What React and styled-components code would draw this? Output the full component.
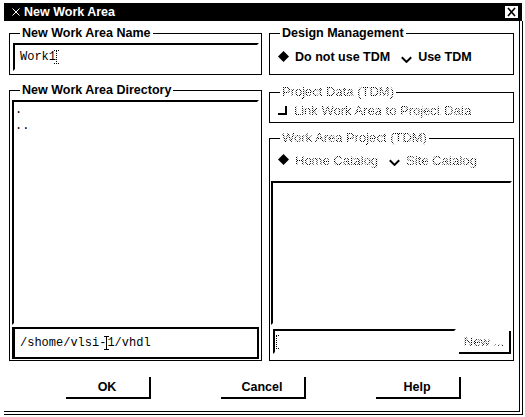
import React from "react";
import styled, { createGlobalStyle, css } from "styled-components";

const GlobalStyle = createGlobalStyle`
  html, body {
    margin: 0;
    padding: 0;
    background: #fff;
  }
  body {
    font-family: "Liberation Sans", Arial, sans-serif;
    color: #000;
  }
`;

// insensitive widgets draw their text through a 50% stipple
const stipple = css`
  color: transparent;
  background-image: repeating-conic-gradient(#000 0% 25%, #fff 0% 50%);
  background-size: 2px 2px;
  -webkit-background-clip: text;
  background-clip: text;
`;

function Caret({ dotted }) {
  const dash = dotted ? "1 1" : undefined;
  return (
    <CaretMark width="5" height="14" viewBox="0 0 5 14">
      <path d="M0 0.5H5M0 13.5H5" stroke="#000" strokeDasharray={dash} />
      <path d="M2.5 1V13" stroke="#000" strokeDasharray={dash} />
    </CaretMark>
  );
}

function Toggle({ on, disabled, children }) {
  return (
    <ToggleItem>
      <svg width="11" height="12" viewBox="0 0 11 12">
        {on ? (
          <path d="M5.5 0L11 5.5L5.5 11L0 5.5Z" fill="#000" />
        ) : (
          <path d="M0.8 6.2L5.5 10.9L10.2 6.2" fill="none" stroke="#000" strokeWidth="2" />
        )}
      </svg>
      <ToggleLabel $disabled={disabled}>{children}</ToggleLabel>
    </ToggleItem>
  );
}

function App() {
  return (
    <>
      <GlobalStyle />
      <Window>
        <TitleBar>
          <svg width="8" height="8" viewBox="0 0 8 8">
            <path d="M0.5 0.5L7.5 7.5M7.5 0.5L0.5 7.5" stroke="#fff" strokeWidth="1" />
          </svg>
          <TitleText>New Work Area</TitleText>
          <CloseBox>
            <svg width="13" height="12" viewBox="0 0 13 12">
              <path d="M3 2L10 10M10 2L3 10" stroke="#000" strokeWidth="1.6" />
            </svg>
          </CloseBox>
        </TitleBar>
        <Frame>
          <Columns>
            <Column>
              <Group>
                <Legend>New Work Area Name</Legend>
                <GroupBody $pad="3px 2px 3px 3px">
                  <TextField $h={28}>
                    Work1
                    <Caret dotted />
                  </TextField>
                </GroupBody>
              </Group>
              <Group $top={8} $grow>
                <Legend>New Work Area Directory</Legend>
                <GroupBody $pad="3px 2px 1px 2px">
                  <List>
                    <ListItem>.</ListItem>
                    <ListItem>..</ListItem>
                  </List>
                  <TextField $h={32} $focus $top={2}>
                    /shome/vlsi-
                    <Caret />
                    1/vhdl
                  </TextField>
                </GroupBody>
              </Group>
            </Column>
            <Column>
              <Group>
                <Legend>Design Management</Legend>
                <GroupBody $pad="6px 0 6px 8px">
                  <ToggleRow>
                    <Toggle on>Do not use TDM</Toggle>
                    <Toggle>Use TDM</Toggle>
                  </ToggleRow>
                </GroupBody>
              </Group>
              <Group $top={10}>
                <Legend $disabled>Project Data (TDM)</Legend>
                <GroupBody $pad="0 0 1px 8px">
                  <ToggleRow>
                    <ToggleItem $gap={7}>
                      <CheckMark />
                      <ToggleLabel $disabled>Link Work Area to Project Data</ToggleLabel>
                    </ToggleItem>
                  </ToggleRow>
                </GroupBody>
              </Group>
              <Group $top={8} $grow>
                <Legend $disabled>Work Area Project (TDM)</Legend>
                <GroupBody $pad="4px 1px 6px 1px">
                  <ToggleRow $indent={7}>
                    <Toggle on disabled>Home Catalog</Toggle>
                    <Toggle disabled>Site Catalog</Toggle>
                  </ToggleRow>
                  <List $top={10} />
                  <FieldRow>
                    <TextField $h={25} $pad={1} $grow>
                      <Caret dotted />
                    </TextField>
                    <PushButton $small>New ...</PushButton>
                  </FieldRow>
                </GroupBody>
              </Group>
            </Column>
          </Columns>
          <ButtonRow>
            <PushButton>OK</PushButton>
            <PushButton>Cancel</PushButton>
            <PushButton>Help</PushButton>
          </ButtonRow>
        </Frame>
      </Window>
    </>
  );
}

export default App;

const Window = styled.div`
  margin: 3px 0 0 4px;
  width: 519px;
  display: flex;
  flex-direction: column;
`;

const TitleBar = styled.div`
  box-sizing: border-box;
  width: 518px;
  height: 18px;
  padding: 0 4px 0 8px;
  display: flex;
  align-items: center;
  background: #000;
  color: #fff;
`;

const TitleText = styled.span`
  flex: 1;
  margin-left: 4px;
  font-size: 12.5px;
  font-weight: bold;
  line-height: 14px;
`;

const CloseBox = styled.span`
  width: 13px;
  height: 12px;
  display: flex;
  background: #fff;
`;

const Frame = styled.div`
  box-sizing: border-box;
  width: 519px;
  padding: 5px 5px 12px 5px;
  border-right: 4px double #000;
  border-bottom: 4px double #000;
`;

const Columns = styled.div`
  display: grid;
  grid-template-columns: 253px 245px;
  column-gap: 7px;
  height: 335px;
`;

const Column = styled.div`
  display: flex;
  flex-direction: column;
  min-height: 0;
`;

const Group = styled.fieldset`
  margin: ${(p) => p.$top || 0}px 0 0 0;
  padding: 0;
  min-width: 0;
  min-height: 0;
  border: 1px solid #000;
  display: flex;
  flex-direction: column;
  flex: ${(p) => (p.$grow ? 1 : "none")};
`;

const Legend = styled.legend`
  margin-left: 10px;
  padding: 0 2px;
  font-size: ${(p) => (p.$disabled ? "13px" : "12.5px")};
  font-weight: ${(p) => (p.$disabled ? "normal" : "bold")};
  line-height: 14px;
  ${(p) => p.$disabled && stipple}
`;

const GroupBody = styled.div`
  flex: 1;
  min-height: 0;
  padding: ${(p) => p.$pad};
  display: flex;
  flex-direction: column;
`;

const TextField = styled.div`
  box-sizing: border-box;
  height: ${(p) => p.$h}px;
  margin-top: ${(p) => p.$top || 0}px;
  flex: ${(p) => (p.$grow ? 1 : "none")};
  padding-left: ${(p) => (p.$pad != null ? p.$pad : 5)}px;
  display: flex;
  align-items: center;
  white-space: pre;
  font-family: "Liberation Mono", "Courier New", monospace;
  font-size: 12px;
  border-top: 2px solid #000;
  border-left: ${(p) => (p.$focus ? "3px" : "2px")} solid #000;
  border-right: 2px solid ${(p) => (p.$focus ? "#000" : "#fff")};
  border-bottom: 2px solid ${(p) => (p.$focus ? "#000" : "#fff")};
`;

const CaretMark = styled.svg`
  flex: none;
  margin: 0 -2px 0 -2px;
`;

const List = styled.div`
  flex: 1;
  min-height: 0;
  margin-top: ${(p) => p.$top || 0}px;
  padding-left: 1px;
  border-top: 2px solid #000;
  border-left: 2px solid #000;
  border-right: 2px solid #fff;
  border-bottom: 2px solid #fff;
  font-family: "Liberation Mono", "Courier New", monospace;
  font-size: 12px;
  line-height: 16px;
`;

const ListItem = styled.div`
  height: 16px;
`;

const ToggleRow = styled.div`
  height: 22px;
  padding-left: ${(p) => p.$indent || 0}px;
  display: flex;
  align-items: center;
  gap: 11px;
`;

const ToggleItem = styled.span`
  display: inline-flex;
  align-items: center;
  gap: ${(p) => p.$gap || 6}px;
`;

const ToggleLabel = styled.span`
  font-size: ${(p) => (p.$disabled ? "13px" : "12.5px")};
  font-weight: ${(p) => (p.$disabled ? "normal" : "bold")};
  line-height: 15px;
  white-space: nowrap;
  ${(p) => p.$disabled && stipple}
`;

const CheckMark = styled.span`
  box-sizing: border-box;
  width: 9px;
  height: 9px;
  border-right: 2px solid #000;
  border-bottom: 2px solid #000;
`;

const FieldRow = styled.div`
  margin-top: 4px;
  padding: 0 1px 0 2px;
  display: flex;
  align-items: flex-end;
  gap: 3px;
`;

const PushButton = styled.button`
  box-sizing: border-box;
  width: ${(p) => (p.$small ? 52 : 85)}px;
  height: ${(p) => (p.$small ? 23 : 22)}px;
  margin: 0;
  padding: 0;
  background: #fff;
  border: none;
  border-right: 2px solid #000;
  border-bottom: 2px solid #000;
  font-family: "Liberation Sans", Arial, sans-serif;
  font-size: ${(p) => (p.$small ? "13px" : "12.5px")};
  font-weight: ${(p) => (p.$small ? "normal" : "bold")};
  color: #000;
  ${(p) => p.$small && css`
    span, & {
      ${stipple}
    }
  `}
`;

const ButtonRow = styled.div`
  margin-top: 16px;
  padding-left: 3px;
  height: 22px;
  display: flex;
  justify-content: center;
  gap: 70px;
`;
